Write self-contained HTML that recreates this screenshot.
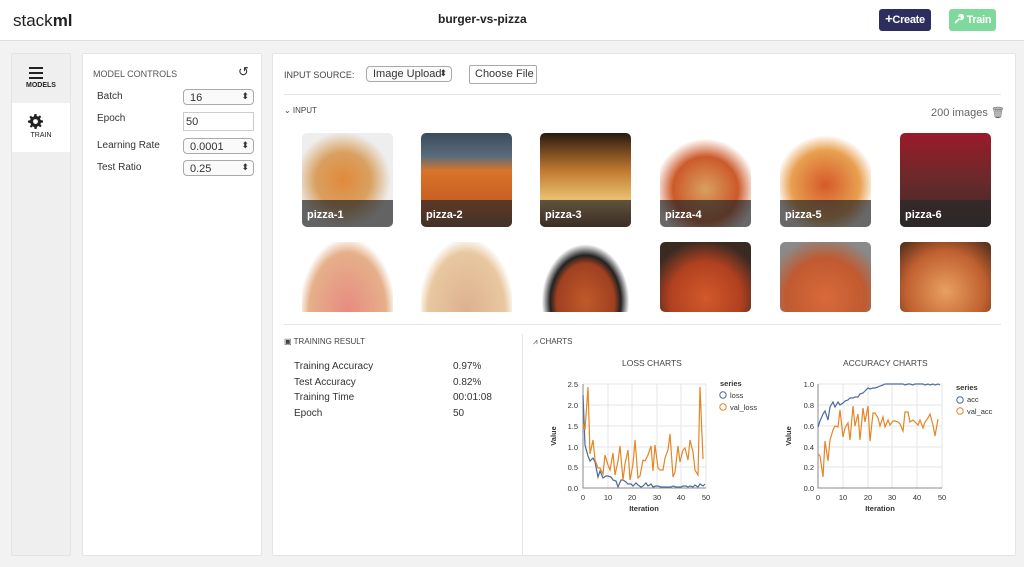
<!DOCTYPE html>
<html><head><meta charset="utf-8"><style>
*{box-sizing:border-box;margin:0;padding:0}
body{width:1024px;height:567px;overflow:hidden;background:#f2f2f2;font-family:"Liberation Sans",Arial,sans-serif;color:#333;position:relative}
.hdr{position:absolute;left:0;top:0;width:1024px;height:41px;background:#fff;border-bottom:1px solid #ddd}
.abs{position:absolute}
.panel{position:absolute;background:#fff;border:1px solid #e4e4e4;border-radius:2px}
.sel{position:absolute;border:1px solid #aaa;border-radius:4px;background:#fafafa;font-size:11px;padding:2px 0 0 6px;height:16px;white-space:nowrap}
.sel:after{content:"⬍";position:absolute;right:4px;top:1px;font-size:9px}
.img{position:absolute;width:91px;border-radius:5px;overflow:hidden}
.lab{position:absolute;left:0;bottom:0;width:100%;height:27px;background:rgba(40,40,40,.7);color:#fff;font-weight:bold;font-size:11px;padding:9px 0 0 5px}
.btn{position:absolute;top:9px;height:22px;border-radius:3px;color:#fff;font-size:11px;font-weight:bold;white-space:nowrap;padding-top:5px;text-align:center;letter-spacing:-0.3px}
</style></head><body>
<div class="hdr">
 <div class="abs" style="left:13px;top:11px;font-size:17px;color:#222">stack<b>ml</b></div>
 <div class="abs" style="left:438px;top:12px;font-size:12px;font-weight:bold;color:#222">burger-vs-pizza</div>
 <div class="btn" style="left:879px;width:52px;background:#2c2f5e"><b style="font-size:13px;line-height:10px">+</b>Create</div>
 <div class="btn" style="left:949px;width:47px;background:#7fd89c"><svg width="10" height="10" viewBox="0 0 10 10" style="vertical-align:-1px"><path d="M1 9L5.5 4.5M5 3a2.2 2.2 0 0 1 3.5-2L7 2.5 7.5 3.5 9 2a2.2 2.2 0 0 1-3 3" stroke="#fff" stroke-width="1.6" fill="none"/></svg> Train</div>
</div>
<div class="panel" style="left:11px;top:53px;width:60px;height:503px;background:#efefef"></div>
<div class="abs" style="left:12px;top:103px;width:58px;height:49px;background:#fff"></div>
<div class="abs" style="left:29px;top:67px;width:14px;height:2px;background:#222;box-shadow:0 5px 0 #222,0 10px 0 #222"></div>
<div class="abs" style="left:12px;top:82px;width:58px;text-align:center;font-size:7px;font-weight:bold;color:#222">MODELS</div>
<svg class="abs" style="left:28px;top:114px" width="15" height="15" viewBox="0 0 16 16"><path fill="#222" d="M7 0h2l.4 2.2 1.5.6 1.8-1.3 1.4 1.4-1.3 1.8.6 1.5L16 7v2l-2.2.4-.6 1.5 1.3 1.8-1.4 1.4-1.8-1.3-1.5.6L9 16H7l-.4-2.2-1.5-.6-1.8 1.3-1.4-1.4 1.3-1.8-.6-1.5L0 9V7l2.2-.4.6-1.5-1.3-1.8 1.4-1.4 1.8 1.3 1.5-.6z"/><circle cx="8" cy="8" r="2.6" fill="#fff"/></svg>
<div class="abs" style="left:12px;top:132px;width:58px;text-align:center;font-size:7px;color:#222">TRAIN</div>

<div class="panel" style="left:82px;top:53px;width:180px;height:503px">
 <div class="abs" style="left:10px;top:15px;font-size:9px;color:#555">MODEL CONTROLS</div>
 <div class="abs" style="left:155px;top:10px;font-size:13px">↺</div>
 <div class="abs" style="left:14px;top:37px;font-size:10px">Batch</div>
 <div class="abs" style="left:14px;top:59px;font-size:10px">Epoch</div>
 <div class="abs" style="left:14px;top:86px;font-size:10px">Learning Rate</div>
 <div class="abs" style="left:14px;top:108px;font-size:10px">Test Ratio</div>
 <div class="sel" style="left:100px;top:35px;width:71px">16</div>
 <div class="abs" style="left:100px;top:58px;width:71px;height:19px;border:1px solid #ccc;font-size:11px;padding:3px 0 0 2px">50</div>
 <div class="sel" style="left:100px;top:84px;width:71px">0.0001</div>
 <div class="sel" style="left:100px;top:106px;width:71px">0.25</div>
</div>

<div class="panel" style="left:272px;top:53px;width:744px;height:503px">
 <div class="abs" style="left:11px;top:16px;font-size:9px;color:#444">INPUT SOURCE:</div>
 <div class="sel" style="left:93px;top:12px;width:86px;height:16px;font-size:11px;padding-top:1px">Image Upload</div>
 <div class="abs" style="left:196px;top:11px;width:68px;height:19px;border:1px solid #aaa;border-radius:2px;font-size:11px;padding:2px 0 0 5px">Choose File</div>
 <div class="abs" style="left:11px;top:40px;width:717px;height:1px;background:#e6e6e6"></div>
 <div class="abs" style="left:11px;top:52px;font-size:8px;color:#444">⌄ INPUT</div>
 <div class="abs" style="left:658px;top:52px;font-size:11px;color:#666">200 images 🗑︎</div>
 <div class="abs" style="left:11px;top:270px;width:717px;height:1px;background:#e6e6e6"></div>
 <div class="abs" style="left:249px;top:280px;width:1px;height:222px;background:#e6e6e6"></div>
 <div class="abs" style="left:11px;top:283px;font-size:8px;color:#444">▣ TRAINING RESULT</div>
 <div class="abs" style="left:260px;top:283px;font-size:8px;color:#444">⩘ CHARTS</div>
 <div class="abs" style="left:21px;top:305px;font-size:10px;line-height:15.7px">Training Accuracy<br>Test Accuracy<br>Training Time<br>Epoch</div>
 <div class="abs" style="left:180px;top:305px;font-size:10px;line-height:15.7px">0.97%<br>0.82%<br>00:01:08<br>50</div>
</div>

<div class="img" style="left:302px;top:133px;height:94px;background:radial-gradient(circle at 45% 50%,#e08a3a 0,#d9a060 40%,#eee 70%)"><div class="lab">pizza-1</div></div>
<div class="img" style="left:421px;top:133px;height:94px;background:linear-gradient(#3a4a5a 0,#5a6d7c 25%,#d7742a 40%,#c65a20 80%,#7a4a2a)"><div class="lab">pizza-2</div></div>
<div class="img" style="left:540px;top:133px;height:94px;background:linear-gradient(#2a1a10,#c07a30 40%,#e8c070 70%,#6a3a1a)"><div class="lab">pizza-3</div></div>
<div class="img" style="left:660px;top:133px;height:94px;background:radial-gradient(circle at 50% 60%,#d9a060,#cc5a2a 45%,#fff 70%)"><div class="lab">pizza-4</div></div>
<div class="img" style="left:780px;top:133px;height:94px;background:radial-gradient(circle at 50% 55%,#d55a2a,#e8a050 50%,#fff 72%)"><div class="lab">pizza-5</div></div>
<div class="img" style="left:900px;top:133px;height:94px;background:linear-gradient(#9a1a2a,#6a2a2a 50%,#3a2a2a)"><div class="lab">pizza-6</div></div>
<div class="img" style="left:302px;top:242px;height:70px;border-radius:0;background:radial-gradient(ellipse at 50% 100%,#e88a80,#e5b08a 60%,#fff 75%)"></div>
<div class="img" style="left:421px;top:242px;height:70px;border-radius:0;background:radial-gradient(ellipse at 50% 100%,#ddb090,#e8c8a0 60%,#fff 75%)"></div>
<div class="img" style="left:540px;top:242px;height:70px;border-radius:0;background:radial-gradient(ellipse at 50% 85%,#c05a2a,#a04020 45%,#222 55%,#fff 68%)"></div>
<div class="img" style="left:660px;top:242px;height:70px;background:radial-gradient(circle at 50% 80%,#d25a2a,#b04020 50%,#3a2a22 80%)"></div>
<div class="img" style="left:780px;top:242px;height:70px;background:radial-gradient(circle at 50% 80%,#d86a3a,#c05a30 55%,#8a8a8a 85%)"></div>
<div class="img" style="left:900px;top:242px;height:70px;background:radial-gradient(circle at 50% 70%,#e8a060,#c06030 60%,#4a2a1a)"></div>

<svg class="abs" style="left:530px;top:350px" width="494" height="170" font-family="Liberation Sans,sans-serif" font-size="7.5" fill="#333">
 <text x="92" y="16" font-size="8.5" fill="#444">LOSS CHARTS</text>
 <text x="313" y="16" font-size="8.5" fill="#444">ACCURACY CHARTS</text>
 <g stroke="#e6e6e6" stroke-width="1">
  <path d="M53 34H176M53 55H176M53 76H176M53 97H176M53 117H176M53 138H176M53 34V138M78 34V138M102 34V138M127 34V138M151 34V138M176 34V138"/>
  <path d="M288 34H412M288 55H412M288 76H412M288 97H412M288 117H412M288 138H412M288 34V138M313 34V138M338 34V138M362 34V138M387 34V138M412 34V138"/>
 </g>
 <path d="M53 34V138H176M288 34V138H412" stroke="#888" fill="none"/>
 <g text-anchor="end"><text x="48" y="37">2.5</text><text x="48" y="58">2.0</text><text x="48" y="79">1.5</text><text x="48" y="100">1.0</text><text x="48" y="120">0.5</text><text x="48" y="141">0.0</text>
 <text x="284" y="37">1.0</text><text x="284" y="58">0.8</text><text x="284" y="79">0.6</text><text x="284" y="100">0.4</text><text x="284" y="120">0.2</text><text x="284" y="141">0.0</text></g>
 <g text-anchor="middle"><text x="53" y="150">0</text><text x="78" y="150">10</text><text x="102" y="150">20</text><text x="127" y="150">30</text><text x="151" y="150">40</text><text x="176" y="150">50</text>
 <text x="288" y="150">0</text><text x="313" y="150">10</text><text x="338" y="150">20</text><text x="362" y="150">30</text><text x="387" y="150">40</text><text x="412" y="150">50</text>
 <text x="114" y="161" font-weight="bold">Iteration</text><text x="350" y="161" font-weight="bold">Iteration</text></g>
 <text transform="translate(26 86) rotate(-90)" text-anchor="middle" font-weight="bold">Value</text>
 <text transform="translate(261 86) rotate(-90)" text-anchor="middle" font-weight="bold">Value</text>
 <polyline fill="none" stroke="#4c6a9b" stroke-width="1.2" points="53,45 55,95 58,106 60,111 63,108 65,112 68,127 70,121 73,128 76,126 78,126 81,127 83,130 86,131 88,137 91,130 93,130 96,132 98,134 101,134 103,136 106,133 108,135 111,137 113,136 116,133 118,136 121,134 123,137 126,136 128,136 131,137 133,137 136,137 138,137 141,137 143,136 146,137 148,137 151,137 153,136 156,136 158,137 160,136 163,137 165,135 168,137 170,134 173,136 175,134"/>
 <polyline fill="none" stroke="#e58526" stroke-width="1.2" points="53,74 55,80 58,37 60,104 63,90 65,110 68,118 70,118 73,124 75,105 78,115 80,120 83,103 85,125 88,111 90,96 93,130 95,114 98,100 100,130 103,114 105,90 108,128 110,126 113,110 115,111 118,105 121,96 123,121 125,95 128,118 130,120 133,120 135,108 138,100 140,84 143,127 145,122 148,96 150,112 153,100 155,98 158,110 160,90 163,102 165,120 168,125 170,37 173,109"/>
 <polyline fill="none" stroke="#4c6a9b" stroke-width="1.2" points="288,77 290,71 293,64 295,61 298,70 300,57 303,52 305,57 308,52 310,55 313,53 315,51 318,50 320,48 323,48 325,47 328,47 330,44 333,43 335,41 338,38 340,39 343,38 345,38 348,37 350,36 353,35 355,34 358,34 360,34 363,34 365,34 368,34 370,34 373,34 375,35 378,34 380,34 383,35 385,34 388,34 390,34 393,34 395,35 398,34 400,35 403,34 405,35 408,34 410,35"/>
 <polyline fill="none" stroke="#e58526" stroke-width="1.2" points="288,104 290,106 293,127 295,91 298,111 300,90 303,80 305,76 308,77 310,60 313,87 315,78 318,73 320,90 323,56 325,76 328,64 330,90 333,58 335,72 338,56 340,91 343,63 345,63 348,68 350,76 353,67 355,77 358,70 360,75 363,71 365,71 368,72 370,74 373,81 375,62 378,62 380,72 383,70 385,72 388,75 390,70 393,78 395,72 398,68 400,64 403,75 405,86 408,69"/>
 <text x="190" y="36" font-weight="bold">series</text>
 <circle cx="193" cy="45" r="3.2" fill="none" stroke="#4c6a9b"/><text x="200" y="48">loss</text>
 <circle cx="193" cy="57" r="3.2" fill="none" stroke="#e58526"/><text x="200" y="60">val_loss</text>
 <text x="426" y="40" font-weight="bold">series</text>
 <circle cx="430" cy="50" r="3.2" fill="none" stroke="#4c6a9b"/><text x="437" y="52">acc</text>
 <circle cx="430" cy="61" r="3.2" fill="none" stroke="#e58526"/><text x="437" y="64">val_acc</text>
</svg>
</body></html>
